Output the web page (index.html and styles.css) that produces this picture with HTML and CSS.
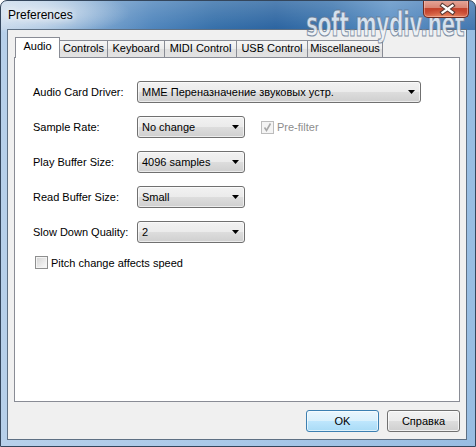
FILE: index.html
```html
<!DOCTYPE html>
<html>
<head>
<meta charset="utf-8">
<title>Preferences</title>
<link rel="stylesheet" href="styles.css">
</head>
<body>
<div class="window">
  <div class="titlebar">
    <div class="title">Preferences</div>
    <div class="close">
      <svg width="46" height="18" viewBox="0 0 46 18">
        <path d="M19.5 6.5 L29.5 13.5 M29.5 6.5 L19.5 13.5" stroke="#5a3a35" stroke-width="4.4" stroke-linecap="square"/>
        <path d="M19.5 6.5 L29.5 13.5 M29.5 6.5 L19.5 13.5" stroke="#ffffff" stroke-width="2.2" stroke-linecap="square"/>
      </svg>
    </div>
  </div>
  <div class="client">
    <div class="tabs">
      <div class="tab active t-audio">Audio</div>
      <div class="tab t-controls">Controls</div>
      <div class="tab t-keyboard">Keyboard</div>
      <div class="tab t-midi">MIDI Control</div>
      <div class="tab t-usb">USB Control</div>
      <div class="tab t-misc">Miscellaneous</div>
    </div>
    <div class="panel">
      <div class="row">
        <span class="label">Audio Card Driver:</span>
        <div class="combo wide">MME Переназначение звуковых устр.<svg class="arrow" width="7" height="4" viewBox="0 0 7 4"><polygon points="0,0 7,0 3.5,4" fill="#000"/></svg></div>
      </div>
      <div class="row">
        <span class="label">Sample Rate:</span>
        <div class="combo">No change<svg class="arrow" width="7" height="4" viewBox="0 0 7 4"><polygon points="0,0 7,0 3.5,4" fill="#000"/></svg></div>
        <div class="check disabled prefilter">
          <span class="box"><svg width="11" height="11" viewBox="0 0 11 11"><path d="M2.5 5.5 L4.5 8.5 L8.5 1.5" stroke="#a8a8a8" stroke-width="1.6" fill="none"/></svg></span>
          <span class="check-text">Pre-filter</span>
        </div>
      </div>
      <div class="row">
        <span class="label">Play Buffer Size:</span>
        <div class="combo">4096 samples<svg class="arrow" width="7" height="4" viewBox="0 0 7 4"><polygon points="0,0 7,0 3.5,4" fill="#000"/></svg></div>
      </div>
      <div class="row">
        <span class="label">Read Buffer Size:</span>
        <div class="combo">Small<svg class="arrow" width="7" height="4" viewBox="0 0 7 4"><polygon points="0,0 7,0 3.5,4" fill="#000"/></svg></div>
      </div>
      <div class="row">
        <span class="label">Slow Down Quality:</span>
        <div class="combo">2<svg class="arrow" width="7" height="4" viewBox="0 0 7 4"><polygon points="0,0 7,0 3.5,4" fill="#000"/></svg></div>
      </div>
      <div class="check pitch">
        <span class="box"></span>
        <span class="check-text">Pitch change affects speed</span>
      </div>
    </div>
    <div class="buttons">
      <div class="btn default">OK</div>
      <div class="btn">Справка</div>
    </div>
  </div>
  <div class="watermark">soft.mydiv.net</div>
</div>
</body>
</html>
```

FILE: styles.css
```css
* { box-sizing: border-box; }
html, body { margin: 0; padding: 0; }
body {
  width: 476px;
  height: 447px;
  overflow: hidden;
  background: #ffffff;
  font-family: "Liberation Sans", Arial, sans-serif;
  font-size: 11px;
  color: #000;
}
.window {
  position: relative;
  width: 476px;
  height: 447px;
  border: 1px solid #34465c;
  border-radius: 7px 7px 0 0;
  padding: 0 8px 6px 6px;
  display: flex;
  flex-direction: column;
  overflow: hidden;
  background:
    radial-gradient(ellipse 90px 22px at 40px 12px, rgba(255,255,255,0.55), rgba(255,255,255,0) 100%),
    linear-gradient(to bottom, rgba(255,255,255,0.18), rgba(255,255,255,0) 28px) top left / 100% 29px no-repeat,
    linear-gradient(to right, #c2d5e9 0%, #a6c2df 9%, #7aa4cf 20%, #4f85bc 32%, #3670aa 45%, #2c65a1 58%, #3b74ad 70%, #5e92c6 82%, #4b80b8 92%, #4377b0 100%) top left / 100% 29px no-repeat,
    linear-gradient(to right, #b7d0ea 0%, #a9c8e8 50%, #98bde2 100%);
}
.titlebar {
  height: 28px;
  display: flex;
  justify-content: space-between;
  align-items: flex-start;
  flex: none;
}
.title {
  font-size: 12px;
  padding: 7px 0 0 1px;
  color: #000;
  text-shadow: 0 0 6px rgba(255,255,255,0.9), 0 0 10px rgba(255,255,255,0.7);
}
.close {
  width: 46px;
  height: 18px;
  margin: -1px -2px 0 0;
  border: 1px solid #6b2a20;
  border-top: none;
  border-radius: 0 0 5px 5px;
  background:
    radial-gradient(ellipse 26px 8px at 50% 100%, rgba(255,170,120,0.55), rgba(255,170,120,0) 100%),
    linear-gradient(to bottom, #e6a89b 0%, #d98574 45%, #c4432c 50%, #c94a33 80%, #d66a4f 100%);
  box-shadow: inset 0 0 0 1px rgba(255,210,200,0.45);
  position: relative;
  z-index: 6;
}
.close svg { display: block; margin: -1px 0 0 -1px; }
.client {
  flex: 1;
  background: #f0f0f0;
  border: 1px solid #5e7084;
  padding: 7px 6px 7px 6px;
  display: flex;
  flex-direction: column;
}
.tabs {
  display: flex;
  align-items: flex-end;
  height: 20px;
  padding-left: 1px;
  position: relative;
  z-index: 2;
  flex: none;
}
.tab {
  height: 17px;
  margin-left: -1px;
  border: 1px solid #898c95;
  border-bottom: none;
  background: linear-gradient(to bottom, #f6f6f6 0%, #ebebeb 50%, #dfdfdf 51%, #e3e3e3 100%);
  text-align: center;
  line-height: 15px;
  white-space: nowrap;
}
.tab:first-child { margin-left: 0; }
.tab.active {
  height: 21px;
  margin-bottom: -1px;
  background: #ffffff;
  padding-top: 1px;
  line-height: 15px;
  position: relative;
  z-index: 3;
}
.t-audio { width: 45px; }
.t-controls { width: 49px; }
.t-keyboard { width: 58px; }
.t-midi { width: 73px; }
.t-usb { width: 72px; }
.t-misc { width: 76px; }
.panel {
  height: 345px;
  flex: none;
  background: #ffffff;
  border: 1px solid #898c95;
  padding: 23px 0 0 18px;
  position: relative;
  z-index: 1;
}
.row {
  display: flex;
  align-items: center;
  height: 22px;
  margin-bottom: 13px;
}
.label {
  width: 104px;
  flex: none;
  white-space: nowrap;
}
.combo {
  position: relative;
  width: 108px;
  height: 22px;
  flex: none;
  border: 1px solid #707070;
  border-radius: 3px;
  padding-left: 4px;
  line-height: 20px;
  white-space: nowrap;
  background: linear-gradient(to bottom, #f2f2f2 0%, #ebebeb 50%, #dddddd 51%, #cfcfcf 100%);
  box-shadow: inset 0 0 0 1px rgba(255,255,255,0.6);
}
.combo.wide { width: 284px; }
.arrow {
  position: absolute;
  right: 5px;
  top: 8px;
  display: block;
}
.check {
  display: flex;
  align-items: center;
  height: 13px;
}
.check .box {
  width: 13px;
  height: 13px;
  flex: none;
  border: 1px solid #8e8f8f;
  background: linear-gradient(135deg, #d2d2d2 0%, #f0f0f0 70%, #fafafa 100%);
  box-shadow: inset 0 0 0 1px #f4f4f4;
  display: flex;
  align-items: center;
  justify-content: center;
}
.check .box svg { display: block; }
.check-text { margin-left: 3px; white-space: nowrap; }
.prefilter { margin-left: 16px; }
.check.disabled .box {
  border-color: #bcbcbc;
  background: #f4f4f4;
  box-shadow: none;
}
.check.disabled .check-text { color: #8d8d8d; }
.pitch { margin: 10px 0 0 2px; }
.buttons {
  display: flex;
  justify-content: flex-end;
  gap: 8px;
  margin-top: 8px;
  flex: none;
}
.btn {
  width: 73px;
  height: 22px;
  border: 1px solid #707070;
  border-radius: 3px;
  text-align: center;
  line-height: 20px;
  background: linear-gradient(to bottom, #f2f2f2 0%, #ebebeb 50%, #dddddd 51%, #cfcfcf 100%);
  box-shadow: inset 0 0 0 1px rgba(255,255,255,0.7);
}
.btn.default {
  border-color: #3c7fb1;
  background: linear-gradient(to bottom, #eaf6fd 0%, #d9f0fc 50%, #bee6fd 51%, #a9dbf6 100%);
  box-shadow: inset 0 0 0 1px rgba(255,255,255,0.6);
}
.watermark {
  position: absolute;
  left: 305px;
  top: 10px;
  font-family: "DejaVu Sans", "Liberation Sans", sans-serif;
  font-size: 34px;
  line-height: 26px;
  height: 26px;
  font-weight: bold;
  letter-spacing: -1px;
  white-space: nowrap;
  color: rgba(238,243,248,0.85);
  -webkit-text-stroke: 1.2px rgba(100,118,142,0.8);
  transform: scaleX(0.6);
  transform-origin: 0 0;
  z-index: 5;
  pointer-events: none;
}
```
